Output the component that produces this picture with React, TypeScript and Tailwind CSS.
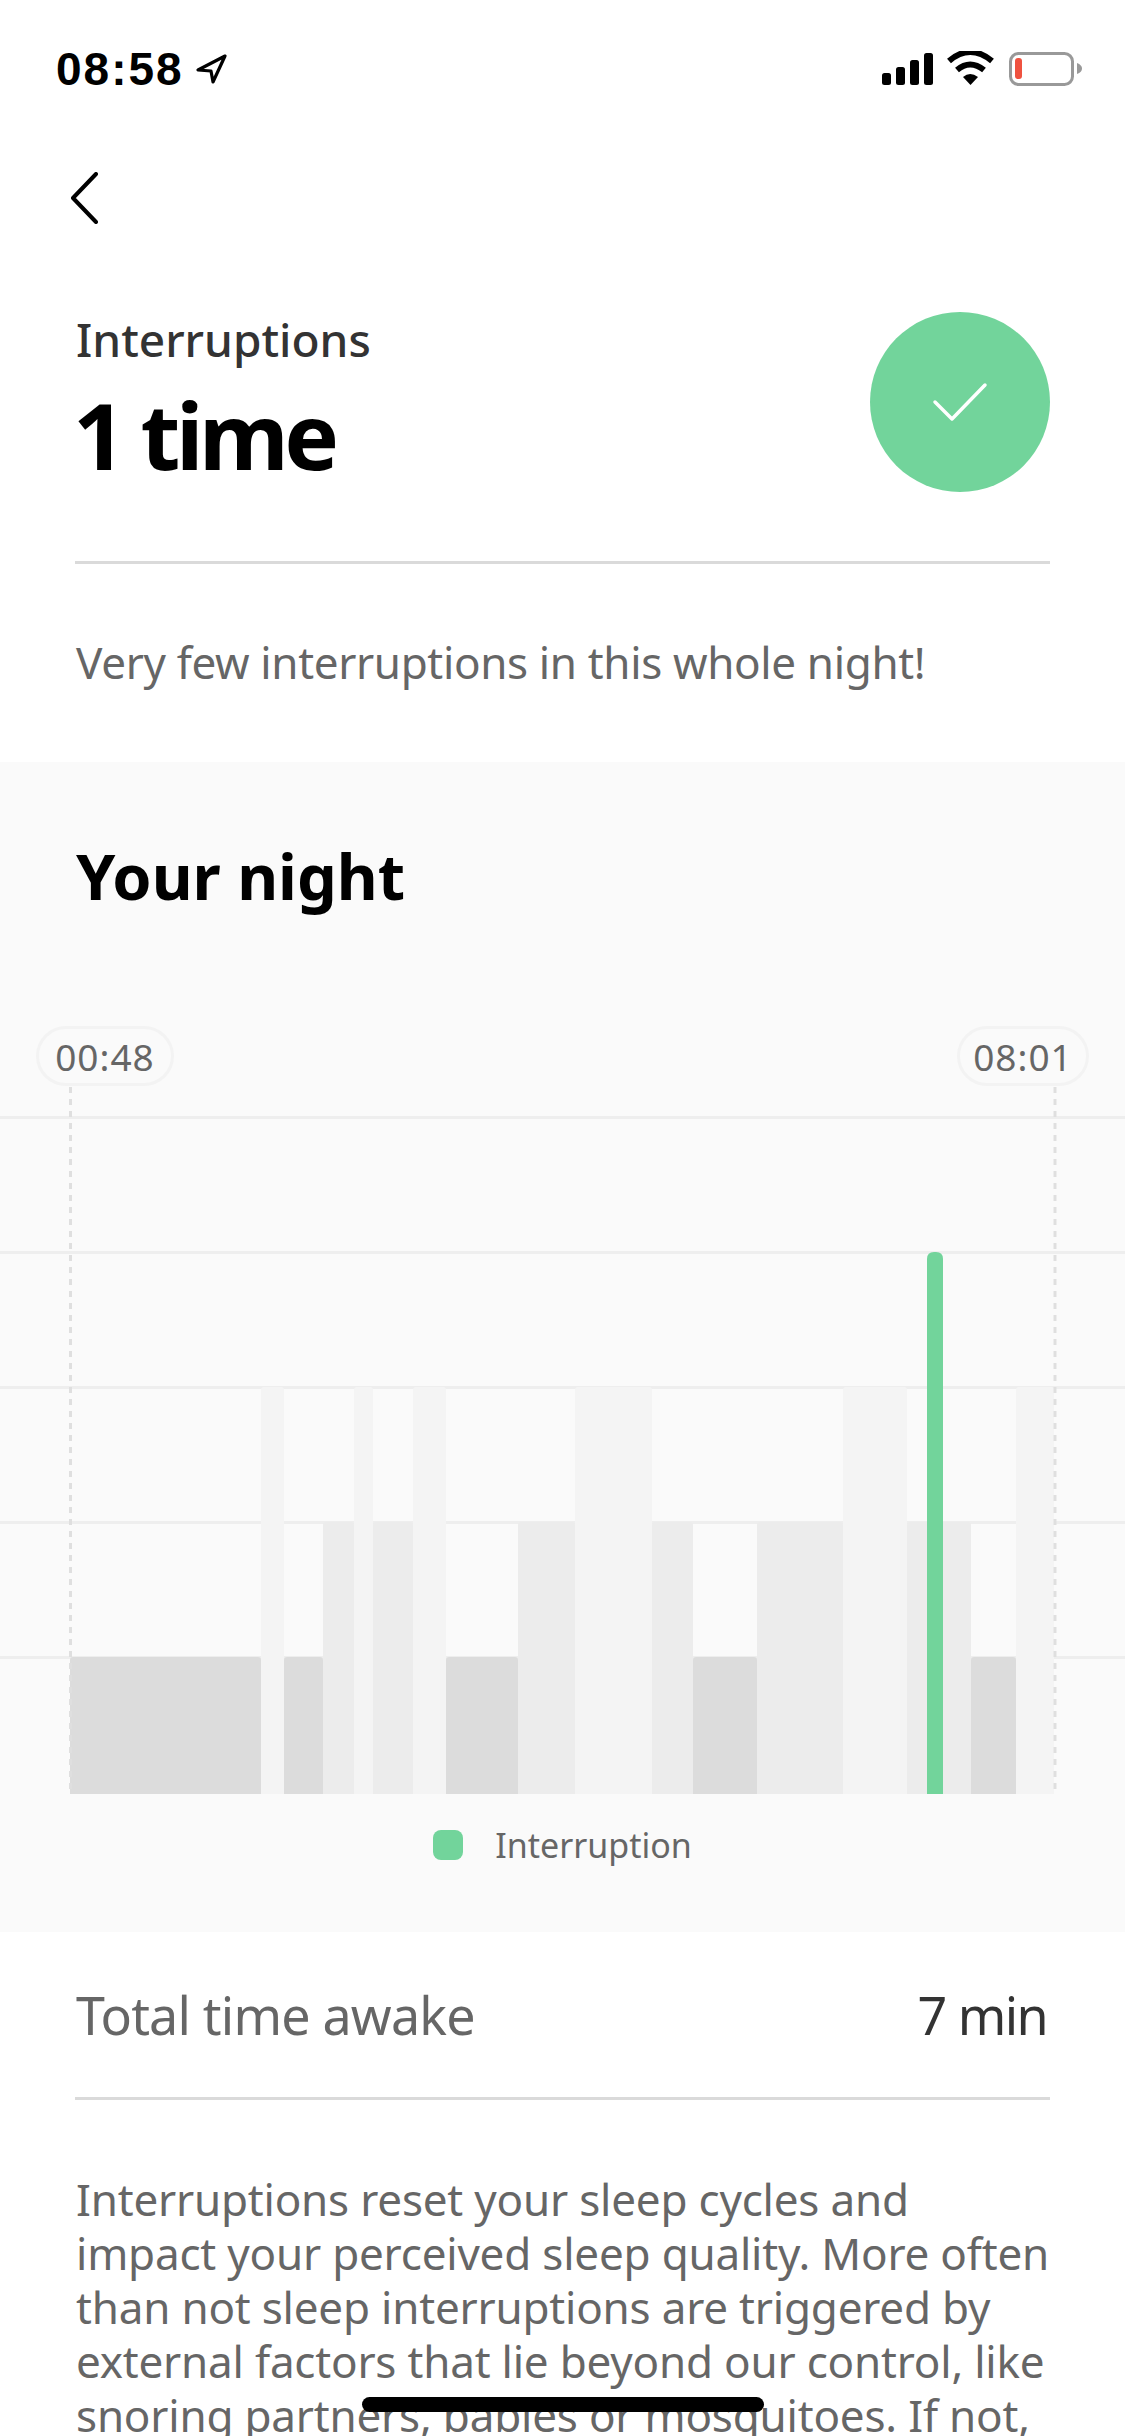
import React from 'react';

const GREEN = '#72d49b';

const bars = [
  { x: 70, w: 191, top: 1657, fill: '#dcdcdc' },
  { x: 261, w: 23, top: 1387, fill: '#f4f4f4' },
  { x: 284, w: 39, top: 1657, fill: '#dcdcdc' },
  { x: 323, w: 31, top: 1522, fill: '#ececec' },
  { x: 354, w: 19, top: 1387, fill: '#f4f4f4' },
  { x: 373, w: 40, top: 1522, fill: '#ececec' },
  { x: 413, w: 33, top: 1387, fill: '#f4f4f4' },
  { x: 446, w: 72, top: 1657, fill: '#dcdcdc' },
  { x: 518, w: 57, top: 1522, fill: '#ececec' },
  { x: 575, w: 77, top: 1387, fill: '#f4f4f4' },
  { x: 652, w: 41, top: 1522, fill: '#ececec' },
  { x: 693, w: 64, top: 1657, fill: '#dcdcdc' },
  { x: 757, w: 86, top: 1522, fill: '#ececec' },
  { x: 843, w: 64, top: 1387, fill: '#f4f4f4' },
  { x: 907, w: 64, top: 1522, fill: '#ececec' },
  { x: 971, w: 45, top: 1657, fill: '#dcdcdc' },
  { x: 1016, w: 38, top: 1387, fill: '#f4f4f4' },
];

const gridLines = [1117, 1252, 1387, 1522, 1657];

// chart svg starts at page y 1087
const CHART_TOP = 1087;

const barPath = (x: number, w: number, top: number, r: number) => {
  const y = top - CHART_TOP;
  const b = 1794 - CHART_TOP;
  return `M${x} ${b}V${y + r}Q${x} ${y} ${x + r} ${y}H${x + w - r}Q${x + w} ${y} ${x + w} ${y + r}V${b}Z`;
};

const StatusBar = () => (
  <div className="flex h-[172px] items-start justify-between pl-[56px] pr-[43px] pt-[47px]">
    <div className="flex items-center">
      <span className="font-['Liberation_Sans',sans-serif] text-[46px] leading-[44px] font-bold tracking-[2px] text-black">
        08:58
      </span>
      <svg width="33" height="32" viewBox="0 0 33 32" className="ml-[11px]">
        <path d="M30 3 L3 17 L16 18 L18 29 Z" fill="none" stroke="#000" strokeWidth="3.2" strokeLinejoin="round" />
      </svg>
    </div>
    <svg width="202" height="36" viewBox="880 51 202 36" className="mt-[4px]">
      <rect x="882" y="73" width="9" height="12" rx="2.5" fill="#000" />
      <rect x="896" y="67" width="9" height="18" rx="2.5" fill="#000" />
      <rect x="910" y="60" width="9" height="25" rx="2.5" fill="#000" />
      <rect x="924" y="53" width="9" height="32" rx="2.5" fill="#000" />
      <path d="M949 61 Q970 43 992 61" fill="none" stroke="#000" strokeWidth="6" />
      <path d="M957 70 Q970 59 984 70" fill="none" stroke="#000" strokeWidth="6" />
      <path d="M963 77 Q970 71 978 77 L970.5 85 Z" fill="#000" />
      <rect x="1010.5" y="53.5" width="62" height="31" rx="8" fill="none" stroke="#999" strokeWidth="3" />
      <rect x="1015" y="58" width="7" height="21" rx="3" fill="#ef5240" />
      <path d="M1077 63 Q1082 65 1082 68.5 Q1082 72 1077 74 Z" fill="#999" />
    </svg>
  </div>
);

const Chart = () => (
  <svg width="1125" height="707" viewBox="0 0 1125 707" className="mt-[1px] block">
    {gridLines.map((y) => (
      <rect key={y} x="0" y={y - CHART_TOP - 1} width="1125" height="3" fill="#eeeeee" />
    ))}
    {bars.map((b) => (
      <path key={b.x} d={barPath(b.x, b.w, b.top, 3)} fill={b.fill} />
    ))}
    <path d={barPath(927, 16, 1252, 7)} fill={GREEN} />
    <line x1="70.5" y1="0" x2="70.5" y2="707" stroke="#dfdfdf" strokeWidth="3" strokeDasharray="6 6" />
    <line x1="1055" y1="0" x2="1055" y2="707" stroke="#dfdfdf" strokeWidth="3" strokeDasharray="6 6" />
  </svg>
);

const TimePill = ({ label, width }: { label: string; width: string }) => (
  <div className={`flex h-[60px] items-center justify-center rounded-full border-[3px] border-[#f3f3f3] text-[37px] leading-none tracking-[1px] text-[#666666] ${width}`}>
    {label}
  </div>
);

const App = () => {
  return (
    <div className="relative h-[2436px] w-[1125px] overflow-hidden bg-white font-['Noto_Sans',sans-serif]">
      <StatusBar />

      {/* Back */}
      <div className="pl-[70px]">
        <svg width="28" height="52" viewBox="0 0 28 52" className="block">
          <path d="M26 2 L3 26 L26 50" fill="none" stroke="#000" strokeWidth="4" strokeLinecap="round" strokeLinejoin="round" />
        </svg>
      </div>

      {/* Summary */}
      <div className="mt-[88px] pl-[76px] pr-[75px]">
        <div className="flex items-start justify-between">
          <div>
            <div className="mt-[-1px] text-[46px] leading-[56px] font-medium text-[#333333]">Interruptions</div>
            <div className="ml-[-3px] mt-[8px] text-[92px] leading-[120px] font-bold tracking-[-4.5px] text-black">1 time</div>
          </div>
          <div className="flex h-[180px] w-[180px] items-center justify-center rounded-full bg-[#72d49b]">
            <svg width="56" height="40" viewBox="0 0 56 40">
              <path d="M3 20 L20 37 L53 3" fill="none" stroke="#fff" strokeWidth="3.5" strokeLinecap="round" strokeLinejoin="round" />
            </svg>
          </div>
        </div>
        <div className="ml-[-1px] mt-[66px] h-[3px] bg-[#dadada]" />
        <p className="mt-[68px] text-[44px] leading-[60px] tracking-[-0.35px] text-[#666666]">Very few interruptions in this whole night!</p>
      </div>

      {/* Your night */}
      <div className="mt-[70px] h-[1170px] bg-[#fafafa]">
        <h2 className="pl-[76px] pt-[70px] text-[63px] leading-[88px] font-bold text-black">Your night</h2>
        <div className="mt-[106px] flex justify-between px-[36px]">
          <TimePill label="00:48" width="w-[138px]" />
          <TimePill label="08:01" width="w-[132px]" />
        </div>
        <Chart />
        <div className="mt-[36px] flex items-center justify-center gap-[32px] text-[34px] leading-[30px] text-[#666666]">
          <span className="h-[30px] w-[30px] rounded-[8px] bg-[#72d49b]" />
          <span>Interruption</span>
        </div>
      </div>

      {/* Detail */}
      <div className="pl-[76px] pr-[75px]">
        <div className="flex h-[165px] items-center justify-between pr-[3px] text-[52px] tracking-[-0.8px]">
          <span className="text-[#666666]">Total time awake</span>
          <span className="tracking-[-1.6px] text-[#333333]">7 min</span>
        </div>
        <div className="ml-[-1px] h-[3px] bg-[#dadada]" />
        <p className="mt-[72px] text-[44px] leading-[54px] tracking-[-0.2px] text-[#666666]">
          Interruptions reset your sleep cycles and impact your perceived sleep quality. More often than not sleep
          interruptions are triggered by external factors that lie beyond our control, like snoring partners, babies
          or mosquitoes. If not,
        </p>
      </div>

      {/* Home indicator */}
      <div className="absolute bottom-[24px] left-[362px] h-[15px] w-[402px] rounded-full bg-black" />
    </div>
  );
};

export default App;
